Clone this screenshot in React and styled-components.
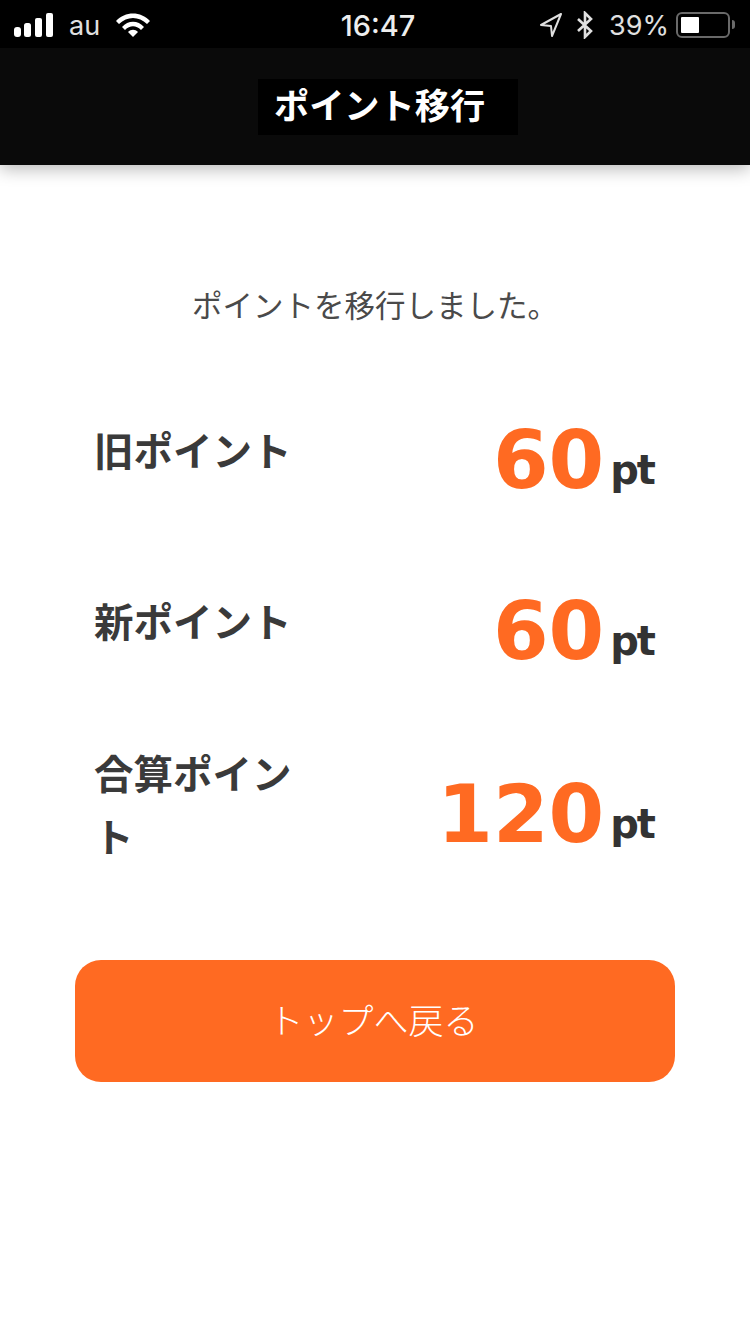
import styled, { createGlobalStyle } from "styled-components";

const CJK = `"Noto Sans CJK JP", "Noto Sans", sans-serif`;
const ORANGE = "#ff6a22";

const GlobalStyle = createGlobalStyle`
  html, body {
    margin: 0;
    padding: 0;
    background: #fff;
  }
`;

const Page = styled.div`
  width: 750px;
  height: 1334px;
  overflow: hidden;
  background: #fff;
  font-family: ${CJK};
`;

const StatusBar = styled.div`
  display: grid;
  grid-template-columns: 1fr auto 1fr;
  align-items: center;
  height: 48px;
  padding: 2px 20px 0 14px;
  box-sizing: border-box;
  background: #000;
  color: #e0e0e0;
  font-family: "Inter", "Liberation Sans", sans-serif;
  font-size: 27px;
`;

const StatusSide = styled.div`
  display: flex;
  align-items: center;
  justify-content: ${(props) => props.$justify ?? "flex-start"};
  gap: ${(props) => props.$gap ?? "10px"};
`;

const Clock = styled.span`
  margin-left: 12px;
  font-size: 29px;
  font-weight: 500;
  color: #eee;
`;

const Header = styled.header`
  display: flex;
  justify-content: center;
  align-items: center;
  height: 117px;
  box-sizing: border-box;
  background: #0a0a0a;
  box-shadow: 0 4px 16px rgba(0, 0, 0, 0.28);
  position: relative;
`;

const Title = styled.h1`
  width: 260px;
  height: 56px;
  margin: 1px 0 0 26px;
  padding-left: 16px;
  box-sizing: border-box;
  background: #000;
  color: #fff;
  font-size: 35.2px;
  font-weight: 700;
  line-height: 50px;
`;

const Content = styled.main`
  display: flex;
  flex-direction: column;
  padding: 114px 75px 0;
`;

const Message = styled.p`
  margin: 0;
  text-align: center;
  color: #4a4a4a;
  font-size: 30.5px;
  line-height: 50px;
`;

const Rows = styled.div`
  display: flex;
  flex-direction: column;
  margin-top: 77px;
`;

const Row = styled.div`
  display: flex;
  justify-content: space-between;
  align-items: center;
  height: ${(props) => props.$height};
  margin-bottom: ${(props) => props.$gap ?? "0"};
  padding: 0 21px 0 19px;
`;

const Label = styled.div`
  width: 200px;
  color: #3a3a3a;
  font-size: 39.5px;
  font-weight: 700;
  line-height: 63px;
  position: relative;
  top: ${(props) => props.$top};
`;

const Amount = styled.div`
  white-space: nowrap;
  font-family: "DejaVu Sans", sans-serif;
  font-weight: 700;
`;

const Value = styled.span`
  color: ${ORANGE};
  font-size: 80px;
  line-height: 90px;
`;

const Unit = styled.span`
  margin-left: 6px;
  color: #333;
  font-size: 40px;
  letter-spacing: -2px;
  vertical-align: 4px;
`;

const TopButton = styled.button`
  width: 600px;
  height: 122px;
  margin-top: 81px;
  padding: 0 3px 6px 0;
  border: 0;
  border-radius: 26px;
  background: ${ORANGE};
  color: #fff;
  font-family: ${CJK};
  font-size: 35px;
  font-weight: 300;
`;

const SignalIcon = () => (
  <svg width="39" height="24" viewBox="0 0 39 24">
    <rect x="0" y="14" width="7" height="10" rx="3" fill="#fff" />
    <rect x="10" y="10" width="7" height="14" rx="2.5" fill="#fff" />
    <rect x="21" y="5" width="7" height="19" rx="2" fill="#fff" />
    <rect x="32" y="0" width="7" height="24" rx="2" fill="#fff" />
  </svg>
);

const WifiIcon = () => (
  <svg width="34" height="24" viewBox="0 0 34 24" fill="#fff">
    <path d="M0 8 C9 -2 25 -2 34 8 L31 11 C23 3 11 3 3 11 Z" />
    <path d="M6 14 C12 7 22 7 28 14 L25 17 C20 12 14 12 9 17 Z" />
    <path d="M12 19 C15 16 19 16 22 19 L17 24 Z" />
  </svg>
);

const LocationSvg = styled.svg`
  margin-right: 6px;
`;

const LocationIcon = () => (
  <LocationSvg width="24" height="26" viewBox="0 0 24 26" fill="none" stroke="#e0e0e0" strokeWidth="2">
    <path d="M22 2 L2 13 L12 14 L13 24 Z" strokeLinejoin="round" />
  </LocationSvg>
);

const BluetoothIcon = () => (
  <svg width="18" height="28" viewBox="0 0 18 28" fill="none" stroke="#e0e0e0" strokeWidth="2.6">
    <path d="M2 8 L15 20 L9 26 L9 2 L15 8 L2 20" />
  </svg>
);

const BatteryShell = styled.div`
  width: 54px;
  height: 26px;
  padding: 3px;
  box-sizing: border-box;
  border: 2px solid #6a6a6a;
  border-radius: 6px;
  position: relative;

  &::after {
    content: "";
    position: absolute;
    right: -7px;
    top: 6px;
    width: 3px;
    height: 9px;
    background: #6a6a6a;
    border-radius: 0 3px 3px 0;
  }
`;

const BatteryFill = styled.div`
  width: 18px;
  height: 100%;
  background: #fff;
  border-radius: 1px;
`;

const Percent = styled.span`
  margin-left: 8px;
`;

const rows = [
  { label: "旧ポイント", value: "60", height: "110px", gap: "61px", top: "-13px" },
  { label: "新ポイント", value: "60", height: "110px", gap: "64px", top: "-13px" },
  { label: "合算ポイント", value: "120", height: "128px", top: "-12px" },
];

export default function App() {
  return (
    <Page>
      <GlobalStyle />
      <StatusBar>
        <StatusSide $gap="16px">
          <SignalIcon />
          <span>au</span>
          <WifiIcon />
        </StatusSide>
        <Clock>16:47</Clock>
        <StatusSide $justify="flex-end" $gap="7px">
          <LocationIcon />
          <BluetoothIcon />
          <Percent>39%</Percent>
          <BatteryShell>
            <BatteryFill />
          </BatteryShell>
        </StatusSide>
      </StatusBar>
      <Header>
        <Title>ポイント移行</Title>
      </Header>
      <Content>
        <Message>ポイントを移行しました。</Message>
        <Rows>
          {rows.map((row) => (
            <Row key={row.label} $height={row.height} $gap={row.gap}>
              <Label $top={row.top}>{row.label}</Label>
              <Amount>
                <Value>{row.value}</Value>
                <Unit>pt</Unit>
              </Amount>
            </Row>
          ))}
        </Rows>
        <TopButton>トップへ戻る</TopButton>
      </Content>
    </Page>
  );
}
